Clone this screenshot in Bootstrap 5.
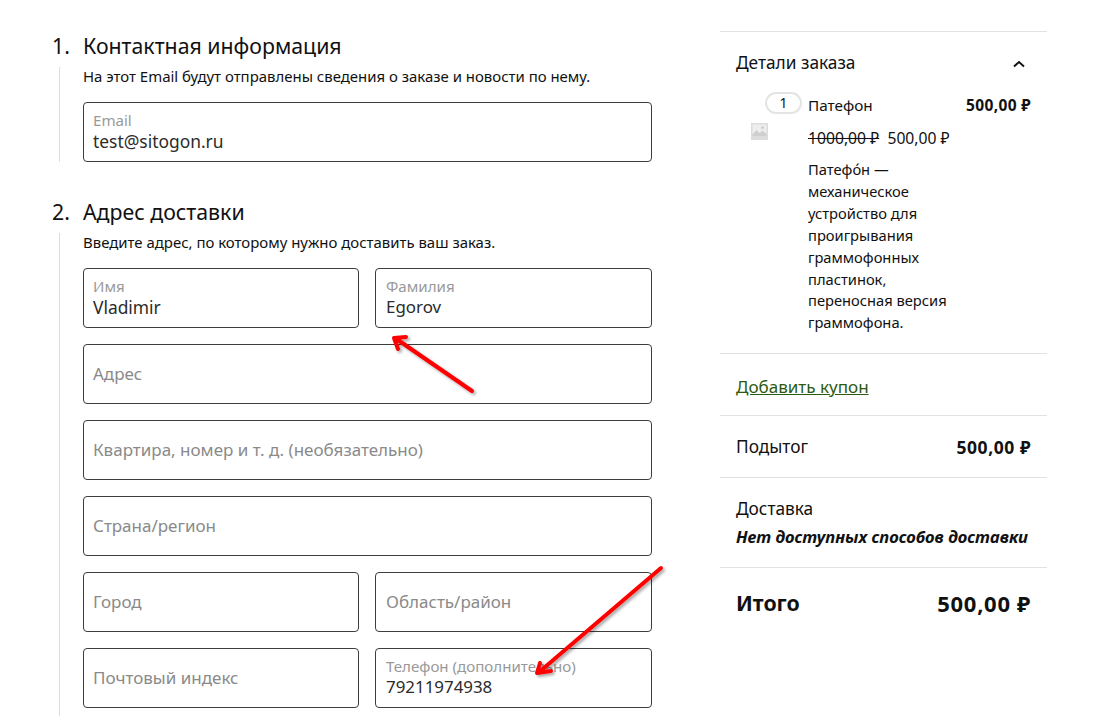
<!DOCTYPE html>
<html lang="ru">
<head>
<meta charset="utf-8">
<title>Оформление заказа</title>
<link href="https://cdn.jsdelivr.net/npm/bootstrap@5.3.0/dist/css/bootstrap.min.css" rel="stylesheet">
<style>
html,body{height:716px;overflow:hidden;background:#fff}
body{font-family:"Noto Sans",sans-serif;color:#111;position:relative}
.shell{padding:31px 65px 0 52px;gap:68px}
.main-col{width:600px;flex:none}
.step-head{font-size:21.3px;line-height:30px;padding-bottom:2px;font-weight:400;margin:0;display:flex;height:32px}
.step-no{width:31px;flex:none}
.step-body{margin-left:7px;padding-left:23px;border-left:1px solid #ddd;color:#111;margin-top:4px}
.step-one{height:95px;margin-bottom:35px}
.step-two{padding-bottom:20px}
.step-note{font-size:14.95px;line-height:18px;height:35px;margin:0}
.fld{border:1px solid #3d3d3d;border-radius:4px;height:60px;padding:0 9px;display:flex;flex-direction:column;justify-content:center;background:#fff;min-width:0}
.fld-right{padding-left:10px}
.fld-lab{font-size:15.1px;line-height:18px;color:#999;white-space:nowrap}
.fld-val{font-size:17.4px;line-height:24px;color:#2b2b2b}
.fld-right .fld-val{font-size:16.9px}
.fld-ph{color:#8a8a8a;font-size:17px}
.fld-stack{display:flex;flex-direction:column;gap:16px}
.fld-pair{display:grid;grid-template-columns:276px 277px;gap:16px}
.side-col{width:327px;flex:none;border-top:1px solid #e2e2e2;font-size:17.3px}
.side-sec{border-bottom:1px solid #e2e2e2;padding:0 16px}
.sum-head{height:62px;padding-top:19px;line-height:24px}
.item-row{display:flex;font-size:14.7px;position:relative}
.thumb-cell{width:72px;flex:none;position:relative}
.qty-pill{position:absolute;left:29px;top:-2px;width:37px;height:22px;border:2px solid #e4e4e4;border-radius:11px;text-align:center;line-height:17px;font-size:14px;background:#fff}
.thumb-ico{position:absolute;left:15px;top:29px}
.item-text{width:143px;flex:none}
.item-price{flex:1;text-align:right;font-weight:700;line-height:22px;font-size:15.5px;letter-spacing:.35px;white-space:nowrap}
.item-name{line-height:22px;margin-bottom:11px;font-size:15.3px}
.item-was{line-height:22px;white-space:nowrap;margin-bottom:10px;font-size:15.7px}
.item-desc{line-height:21.9px;margin:0}
.coupon{color:#2c5a0e;text-decoration:underline;line-height:22px;font-size:17.05px;display:inline-block}
.sec-items{height:322px}
.sec-coupon{height:62px;padding-top:20px}
.sec-sub{height:62px;padding-top:19px;display:flex;justify-content:space-between;line-height:24px}
.sec-sub strong{font-size:17.5px;letter-spacing:.55px}
.sec-ship{height:90px;padding-top:19px;line-height:24px}
.ship-none{font-size:16.700px;font-weight:700;font-style:italic;margin-top:4px;white-space:nowrap}
.sec-total{border:0;padding-top:20px;display:flex;justify-content:space-between;font-size:21.3px;font-weight:700;line-height:30px}
.total-num{font-size:22px;letter-spacing:.7px}
.arrows{position:absolute;left:0;top:0;pointer-events:none}
</style>
</head>
<body>
<div class="shell d-flex align-items-start">
  <main class="main-col">
    <h2 class="step-head"><span class="step-no">1.</span><span>Контактная информация</span></h2>
    <div class="step-body step-one">
      <p class="step-note">На этот Email будут отправлены сведения о заказе и новости по нему.</p>
      <div class="fld"><span class="fld-lab">Email</span><span class="fld-val">test@sitogon.ru</span></div>
    </div>
    <h2 class="step-head"><span class="step-no">2.</span><span>Адрес доставки</span></h2>
    <div class="step-body step-two">
      <p class="step-note">Введите адрес, по которому нужно доставить ваш заказ.</p>
      <div class="fld-stack">
        <div class="fld-pair">
          <div class="fld"><span class="fld-lab">Имя</span><span class="fld-val">Vladimir</span></div>
          <div class="fld fld-right"><span class="fld-lab">Фамилия</span><span class="fld-val">Egorov</span></div>
        </div>
        <div class="fld"><span class="fld-ph">Адрес</span></div>
        <div class="fld"><span class="fld-ph">Квартира, номер и т. д. (необязательно)</span></div>
        <div class="fld"><span class="fld-ph">Страна/регион</span></div>
        <div class="fld-pair">
          <div class="fld"><span class="fld-ph">Город</span></div>
          <div class="fld fld-right"><span class="fld-ph">Область/район</span></div>
        </div>
        <div class="fld-pair">
          <div class="fld"><span class="fld-ph">Почтовый индекс</span></div>
          <div class="fld fld-right"><span class="fld-lab">Телефон (дополнительно)</span><span class="fld-val">79211974938</span></div>
        </div>
      </div>
    </div>
  </main>
  <aside class="side-col">
    <div class="side-sec sec-items">
      <div class="sum-head d-flex justify-content-between">
        <span>Детали заказа</span>
        <svg width="14" height="8" viewBox="0 0 14 8" style="margin-top:9px;margin-right:5px"><path d="M2 6.500 L7 2 L12 6.500" fill="none" stroke="#111" stroke-width="1.900"/></svg>
      </div>
      <div class="item-row">
        <div class="thumb-cell">
          <span class="qty-pill">1</span>
          <svg class="thumb-ico" width="17" height="17" viewBox="0 0 17 17"><rect width="17" height="17" fill="#dcdcdc"/><rect x="1.500" y="1.500" width="14" height="10" fill="#eee"/><path d="M1.500 11.500 L5.500 7 L8.500 10 L11.500 7.500 L15.500 11 L15.500 13 L1.500 13 Z" fill="#cfcfcf"/><circle cx="11.500" cy="4.500" r="1.500" fill="#cfcfcf"/></svg>
        </div>
        <div class="item-text">
          <div class="item-name">Патефон</div>
          <div class="item-was"><s>1000,00 ₽</s>&nbsp; 500,00 ₽</div>
          <p class="item-desc">Патефо́н — механическое устройство для проигрывания граммофонных пластинок, переносная версия граммофона.</p>
        </div>
        <div class="item-price">500,00 ₽</div>
      </div>
    </div>
    <div class="side-sec sec-coupon"><a class="coupon" href="#">Добавить купон</a></div>
    <div class="side-sec sec-sub"><span>Подытог</span><strong>500,00 ₽</strong></div>
    <div class="side-sec sec-ship"><div>Доставка</div><div class="ship-none">Нет доступных способов доставки</div></div>
    <div class="side-sec sec-total"><span>Итого</span><span class="total-num">500,00 ₽</span></div>
  </aside>
</div>
<svg class="arrows" width="1112" height="716" viewBox="0 0 1112 716">
  <defs><filter id="sh" x="-20%" y="-20%" width="140%" height="140%"><feDropShadow dx="2" dy="2" stdDeviation="1.500" flood-color="#000" flood-opacity=".35"/></filter></defs>
  <g fill="none" stroke="#f00" stroke-width="4" stroke-linecap="round" stroke-linejoin="round" filter="url(#sh)">
    <path d="M472 391 L395 338 M398 349 L394 338 L406 337"/>
    <path d="M661 568 L538 673 M540 663 L537 673 L551 671"/>
  </g>
</svg>
<script src="https://cdn.jsdelivr.net/npm/bootstrap@5.3.0/dist/js/bootstrap.bundle.min.js"></script>
</body>
</html>
